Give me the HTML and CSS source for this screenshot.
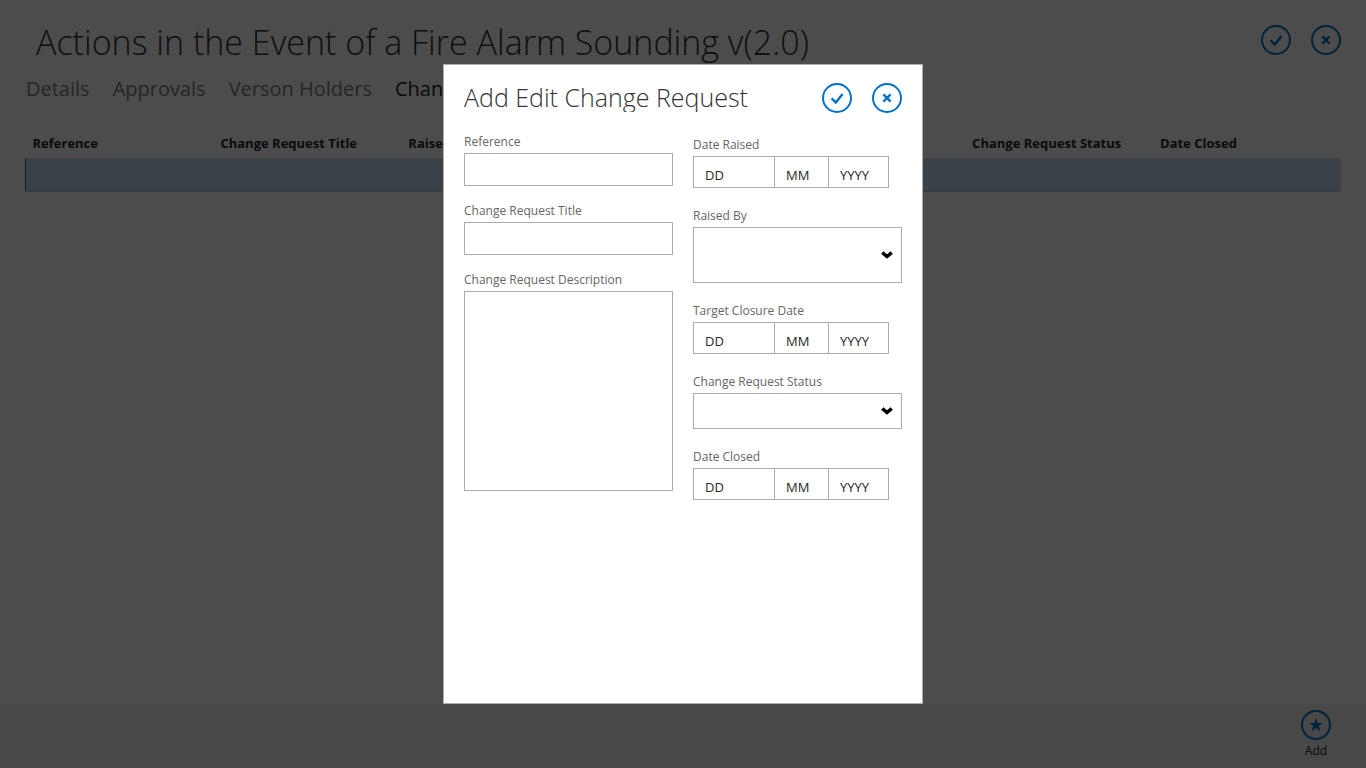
FILE: index.html
```html
<!DOCTYPE html>
<html lang="en">
<head>
<meta charset="utf-8">
<meta name="viewport" content="width=device-width, initial-scale=1">
<title>Add Edit Change Request</title>
<link rel="stylesheet" href="styles.css">
</head>
<body>
<svg class="sprite" aria-hidden="true">
  <symbol id="icon-check" viewBox="0 0 30 30">
    <circle cx="15" cy="15" r="14" fill="none" stroke="currentColor" stroke-width="2"/>
    <path d="M9.600 15.400L13.800 19.400L20.600 11" fill="none" stroke="currentColor" stroke-width="2.400"/>
  </symbol>
  <symbol id="icon-close" viewBox="0 0 30 30">
    <circle cx="15" cy="15" r="14" fill="none" stroke="currentColor" stroke-width="2"/>
    <path d="M11.400 11.400L18.600 18.600M18.600 11.400L11.400 18.600" fill="none" stroke="currentColor" stroke-width="2.400"/>
  </symbol>
  <symbol id="icon-star" viewBox="0 0 30 30">
    <circle cx="15" cy="15" r="14" fill="none" stroke="currentColor" stroke-width="2"/>
    <path d="M15 8L16.700 13H22L17.800 16.100L19.400 21.300L15 18.100L10.600 21.300L12.200 16.100L8 13H13.300Z" fill="currentColor"/>
  </symbol>
  <symbol id="icon-chevron" viewBox="0 0 12 8">
    <path d="M1.300 1.500L6 5.500L10.700 1.500" fill="none" stroke="currentColor" stroke-width="3.600"/>
  </symbol>
</svg>

<div class="page">
  <header class="page-header">
    <h1 class="page-title">Actions in the Event of a Fire Alarm Sounding v(2.0)</h1>
    <div class="actions">
      <button class="icon-button" type="button" aria-label="Save"><svg><use href="#icon-check"/></svg></button>
      <button class="icon-button" type="button" aria-label="Discard"><svg><use href="#icon-close"/></svg></button>
    </div>
  </header>
  <nav class="tabs">
    <a class="tab" href="#">Details</a>
    <a class="tab" href="#">Approvals</a>
    <a class="tab" href="#">Verson Holders</a>
    <a class="tab tab-active" href="#">Change Requests</a>
  </nav>
  <main class="content">
    <table class="grid">
      <thead>
        <tr><th>Reference</th><th>Change Request Title</th><th>Raised By</th><th></th><th></th><th>Change Request Status</th><th>Date Closed</th></tr>
      </thead>
      <tbody>
        <tr><td></td><td></td><td></td><td></td><td></td><td></td><td></td></tr>
      </tbody>
    </table>
  </main>
  <footer class="command-bar">
    <button class="command" type="button"><svg><use href="#icon-star"/></svg><span>Add</span></button>
  </footer>
</div>

<div class="overlay">
  <form class="dialog" role="dialog" aria-labelledby="dialog-title">
    <div class="dialog-header">
      <h2 class="dialog-title" id="dialog-title">Add Edit Change Request</h2>
      <div class="actions">
        <button class="icon-button" type="button" aria-label="OK"><svg><use href="#icon-check"/></svg></button>
        <button class="icon-button" type="button" aria-label="Cancel"><svg><use href="#icon-close"/></svg></button>
      </div>
    </div>
    <div class="dialog-body">
      <div class="column column-text">
        <div class="field">
          <label for="reference">Reference</label>
          <input class="box" id="reference" type="text">
        </div>
        <div class="field">
          <label for="title">Change Request Title</label>
          <input class="box" id="title" type="text">
        </div>
        <div class="field">
          <label for="description">Change Request Description</label>
          <textarea class="box box-area" id="description"></textarea>
        </div>
      </div>
      <div class="column column-dates">
        <div class="field">
          <label for="raised-day">Date Raised</label>
          <div class="date">
            <select class="box" id="raised-day"><option>DD</option></select>
            <select class="box" aria-label="Date Raised month"><option>MM</option></select>
            <select class="box" aria-label="Date Raised year"><option>YYYY</option></select>
          </div>
        </div>
        <div class="field">
          <label for="raised-by">Raised By</label>
          <div class="picker picker-tall">
            <select class="box" id="raised-by"><option></option></select>
            <svg class="chevron" aria-hidden="true"><use href="#icon-chevron"/></svg>
          </div>
        </div>
        <div class="field">
          <label for="target-day">Target Closure Date</label>
          <div class="date">
            <select class="box" id="target-day"><option>DD</option></select>
            <select class="box" aria-label="Target Closure month"><option>MM</option></select>
            <select class="box" aria-label="Target Closure year"><option>YYYY</option></select>
          </div>
        </div>
        <div class="field">
          <label for="status">Change Request Status</label>
          <div class="picker">
            <select class="box" id="status"><option></option></select>
            <svg class="chevron" aria-hidden="true"><use href="#icon-chevron"/></svg>
          </div>
        </div>
        <div class="field">
          <label for="closed-day">Date Closed</label>
          <div class="date">
            <select class="box" id="closed-day"><option>DD</option></select>
            <select class="box" aria-label="Date Closed month"><option>MM</option></select>
            <select class="box" aria-label="Date Closed year"><option>YYYY</option></select>
          </div>
        </div>
      </div>
    </div>
  </form>
</div>
</body>
</html>
```

FILE: styles.css
```css
* {
  box-sizing: border-box;
}

body {
  margin: 0;
  background: #fff;
  color: #333;
  font-family: "Segoe UI", "Open Sans", "Noto Sans", sans-serif;
  font-size: 12px;
  line-height: 16px;
}

.sprite {
  display: none;
}

button {
  padding: 0;
  border: 0;
  background: none;
  font: inherit;
  cursor: pointer;
}

h1, h2 {
  margin: 0;
  font-weight: 300;
}

.page {
  display: flex;
  flex-direction: column;
  min-height: 100vh;
}

.page-header {
  display: flex;
  justify-content: space-between;
  padding: 16px 25px 0 36px;
}

.page-title {
  font-size: 34px;
  line-height: 52px;
}

.actions {
  display: flex;
  gap: 20px;
  padding-top: 9px;
}

.icon-button,
.icon-button svg {
  display: block;
  width: 30px;
  height: 30px;
  color: #0072c6;
}

.tabs {
  display: flex;
  gap: 23px;
  padding: 6px 26px 0;
}

.tab {
  color: #808080;
  font-size: 20px;
  line-height: 30px;
  text-decoration: none;
}

.tab-active {
  color: #262626;
}

.content {
  flex: 1;
  padding: 24px 25px 0;
}

.grid {
  width: 100%;
  table-layout: fixed;
  border-collapse: collapse;
}

.grid th {
  height: 30px;
  padding: 0 7px;
  color: #262626;
  font-size: 13px;
  font-weight: 700;
  text-align: left;
}

.grid td {
  height: 33px;
  border-top: 1px solid #d8dfe6;
  border-bottom: 1px solid #abc4da;
  background: #c3d9ee;
}

.grid td:first-child {
  border-left: 1px solid #0072c6;
}

.command-bar {
  display: flex;
  justify-content: flex-end;
  height: 64px;
  padding: 6px 35px 0;
  background: #f1f1f1;
}

.command {
  display: flex;
  flex-direction: column;
  align-items: center;
  gap: 3px;
  width: 30px;
  color: #262626;
}

.command svg {
  width: 30px;
  height: 30px;
  color: #0072c6;
}

.overlay {
  position: fixed;
  inset: 0;
  display: flex;
  align-items: center;
  justify-content: center;
  padding: 64px 20px;
  background: rgba(0, 0, 0, 0.7);
}

.dialog {
  align-self: stretch;
  width: 480px;
  padding: 9px 20px 20px;
  border: 1px solid #ababab;
  background: #fff;
}

.dialog-header {
  display: flex;
  justify-content: space-between;
  padding-bottom: 9px;
}

.dialog-title {
  height: 38px;
  overflow: hidden;
  font-size: 25px;
  line-height: 46px;
}

.dialog-body {
  display: grid;
  grid-template-columns: 1fr 1fr;
  gap: 20px;
}

.column {
  display: flex;
  flex-direction: column;
}

.column-text {
  gap: 17px;
  padding-top: 12px;
}

.column-dates {
  gap: 20px;
  padding-top: 15px;
}

.field {
  display: flex;
  flex-direction: column;
  gap: 3px;
}

.field label {
  color: #666;
}

.box {
  width: 100%;
  height: 33px;
  margin: 0;
  padding: 4px 10px;
  border: 1px solid #ababab;
  border-radius: 0;
  background: #fff;
  color: #262626;
  font: inherit;
  appearance: none;
}

.box-area {
  height: 200px;
  resize: none;
}

.date {
  display: grid;
  grid-template-columns: 81px 54px 61px;
}

.date .box {
  height: 32px;
  padding: 8px 0 2px 11px;
  font-size: 13px;
}

.date .box:not(:last-child) {
  border-right: 0;
}

.picker {
  position: relative;
}

.picker .box {
  display: block;
  height: 36px;
}

.picker-tall .box {
  height: 56px;
}

.chevron {
  position: absolute;
  top: 50%;
  right: 9px;
  width: 12px;
  height: 8px;
  margin-top: -4px;
  color: #000;
  pointer-events: none;
}
```
